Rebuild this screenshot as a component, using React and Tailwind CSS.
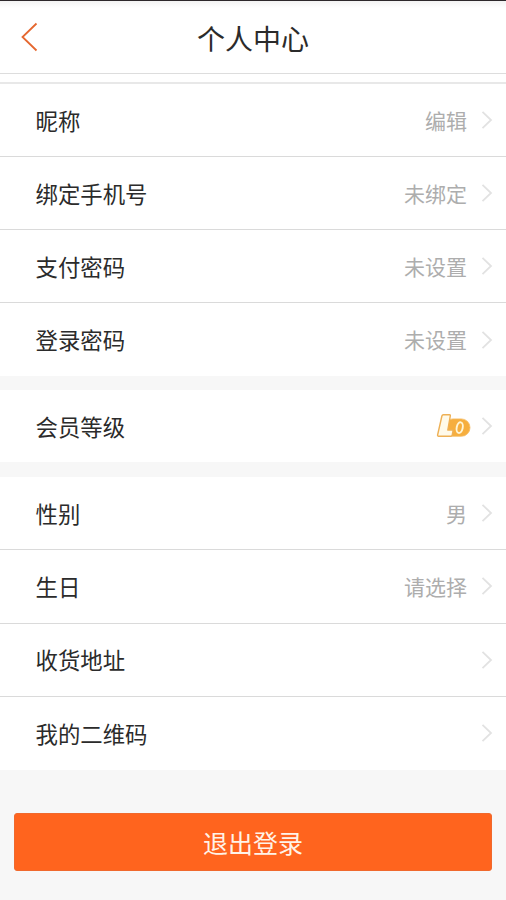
const accountRows = [
  { label: "昵称", value: "编辑" },
  { label: "绑定手机号", value: "未绑定" },
  { label: "支付密码", value: "未设置" },
  { label: "登录密码", value: "未设置" },
];

const profileRows = [
  { label: "性别", value: "男" },
  { label: "生日", value: "请选择" },
  { label: "收货地址" },
  { label: "我的二维码" },
];

const Chevron = () => (
  <svg
    className="ml-[14px] h-[20px] w-[12px] shrink-0"
    viewBox="0 0 12 20"
    fill="none"
    stroke="#e2e2e2"
    strokeWidth="1.8"
  >
    <path d="M1.5 1.8 10 10l-8.5 8.2" />
  </svg>
);

const LevelBadge = () => (
  <svg className="-mr-[4px] h-[28px] w-[35px]" viewBox="0 0 35 28">
    <rect
      x="8"
      y="6.9"
      width="26"
      height="17.4"
      rx="8.6"
      fill="#f6ae3e"
      stroke="#f5bd66"
      strokeWidth="0.8"
    />
    <path
      d="M7.4 2.8h6.1q1 0 .8 1L11.8 18h4.4q1 0 .8 1l-.8 4.2q-.2 1-1.2 1H2.6q-1.2 0-1-1.2L5.9 4q.3-1.200 1.500-1.200z"
      fill="#fffaea"
      stroke="#eeb055"
      strokeWidth="1.4"
      strokeLinejoin="round"
    />
    <ellipse
      cx="23.7"
      cy="15.6"
      rx="3"
      ry="5.4"
      transform="rotate(12 23.7 15.600)"
      fill="none"
      stroke="#fff5d6"
      strokeWidth="1.9"
    />
  </svg>
);

const Row = ({ label, value, children }) => (
  <div className="flex h-full items-center border-b border-[#dadada] pr-[13px] pl-[35.5px] last:border-b-0">
    <span className="flex-1 text-[22.4px] text-[#2b2b2b]">{label}</span>
    {value && <span className="text-[21px] text-[#adadad]">{value}</span>}
    {children}
    <Chevron />
  </div>
);

const RowGroup = ({ rows, className }) => (
  <div className={`grid auto-rows-fr bg-white ${className}`}>
    {rows.map((row) => (
      <Row key={row.label} {...row} />
    ))}
  </div>
);

const App = () => {
  return (
    <div className="flex h-[900px] w-full flex-col bg-[#f7f7f7] font-['Noto_Sans_CJK_SC',sans-serif] leading-none">
      <header className="grid h-[74px] shrink-0 grid-cols-[1fr_auto_1fr] items-center border-t border-b border-t-[#2d282b] border-b-[#dddddd] bg-gradient-to-b from-[#f3f3f3] to-white to-[7px]">
        <svg
          className="ml-[20px] h-[30px] w-[18px]"
          viewBox="0 0 18 30"
          fill="none"
          stroke="#e5672f"
          strokeWidth="1.8"
        >
          <path d="M16.5 1.5 2.5 15l14 13.5" />
        </svg>
        <h1 className="pt-[1px] text-[28px] text-[#2b2b2b]">个人中心</h1>
      </header>

      <div className="h-[10px] shrink-0 border-b-2 border-[#e8e8e8] bg-white" />

      <RowGroup rows={accountRows} className="h-[292px]" />

      <div className="mt-[14px] h-[72px] bg-white">
        <Row label="会员等级">
          <LevelBadge />
        </Row>
      </div>

      <RowGroup rows={profileRows} className="mt-[15px] h-[293px]" />

      <button className="mx-[14px] mt-[43px] h-[58px] rounded-[3px] border border-[#f0692d] bg-[#ff641e] text-[25px] text-[#fff3e8]">
        退出登录
      </button>
    </div>
  );
};

export default App;
